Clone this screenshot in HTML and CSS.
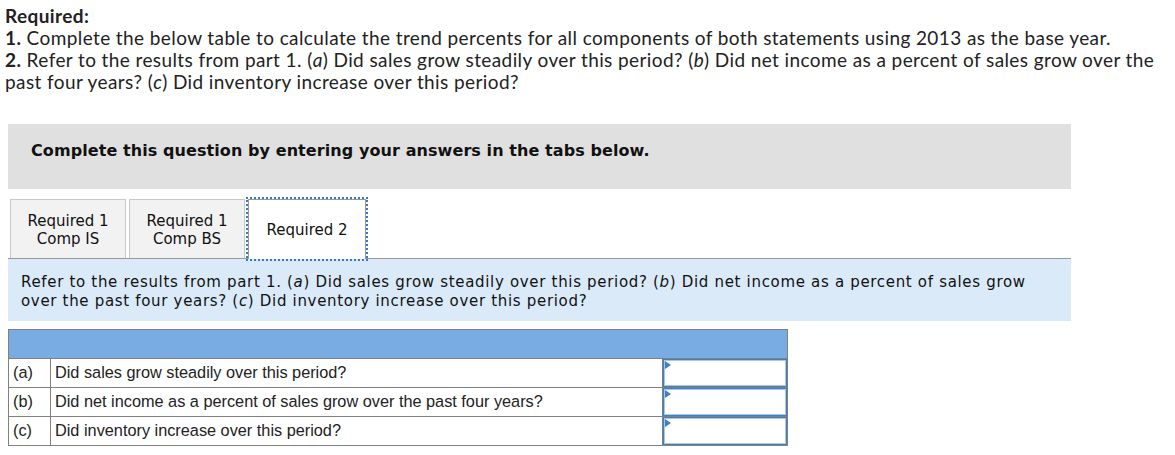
FILE: index.html
```html
<!DOCTYPE html>
<html>
<head>
<meta charset="utf-8">
<link rel="stylesheet" href="styles.css">
</head>
<body>
<div class="intro">
  <div class="req-title">Required:</div>
  <div><b>1.</b> Complete the below table to calculate the trend percents for all components of both statements using 2013 as the base year.</div>
  <div><b>2.</b> Refer to the results from part 1. (<i>a</i>) Did sales grow steadily over this period? (<i>b</i>) Did net income as a percent of sales grow over the past four years? (<i>c</i>) Did inventory increase over this period?</div>
</div>
<div class="wrap">
  <div class="banner">Complete this question by entering your answers in the tabs below.</div>
  <div class="tabs">
    <div class="tab">Required 1<br>Comp IS</div>
    <div class="tab">Required 1<br>Comp BS</div>
    <div class="tab active">Required 2</div>
  </div>
  <div class="prompt">Refer to the results from part 1. (<i>a</i>) Did sales grow steadily over this period? (<i>b</i>) Did net income as a percent of sales grow over the past four years? (<i>c</i>) Did inventory increase over this period?</div>
  <table class="qt">
    <tr class="head"><td colspan="3"></td></tr>
    <tr><td class="lbl">(a)</td><td class="q">Did sales grow steadily over this period?</td><td class="ans"><div class="inp"></div></td></tr>
    <tr><td class="lbl">(b)</td><td class="q">Did net income as a percent of sales grow over the past four years?</td><td class="ans"><div class="inp"></div></td></tr>
    <tr><td class="lbl">(c)</td><td class="q">Did inventory increase over this period?</td><td class="ans"><div class="inp"></div></td></tr>
  </table>
</div>
</body>
</html>
```
FILE: styles.css
```css
html, body { margin: 0; padding: 0; background: #fff; }
body { color: #1a1a1a; }
.intro {
  font-family: Lato, "Open Sans", sans-serif;
  font-size: 19px;
  letter-spacing: 0.4px;
  line-height: 22px;
  padding: 5px 0 0 5px;
  color: #222;
  width: 1160px;
}
.intro b, .req-title { font-weight: 700; }
.wrap { padding: 0 0 0 8px; margin-top: 31px; width: 1063px; }
.banner {
  background: #e0e0e0;
  height: 65px;
  box-sizing: border-box;
  padding: 17px 0 0 23px;
  font-family: "DejaVu Sans", Verdana, sans-serif;
  font-weight: bold;
  font-size: 16px;
  letter-spacing: 0.08px;
  color: #111;
}
.tabs {
  display: flex;
  gap: 3px;
  margin-top: 10px;
  padding-left: 2px;
  border-bottom: 1px solid #999;
  height: 59px;
}
.tab {
  width: 116px;
  box-sizing: border-box;
  height: 59px;
  background: #f2f2f2;
  border: 1px solid #c8c8c8;
  border-bottom: none;
  display: flex;
  align-items: center;
  justify-content: center;
  text-align: center;
  font-family: "DejaVu Sans", Verdana, sans-serif;
  font-size: 15px;
  line-height: 18px;
  padding-top: 2px;
  color: #111;
}
.tab.active {
  width: 118px;
  background: #fff;
  border: 1px solid #999;
  border-bottom: none;
  outline: 2px dotted #3a78c0;
  outline-offset: 0;
  height: 60px;
  padding-top: 0;
}
.prompt {
  background: #dbeaf8;
  height: 62px;
  box-sizing: border-box;
  padding: 14px 13px 0 13px;
  font-family: "DejaVu Sans", Verdana, sans-serif;
  font-size: 15px;
  letter-spacing: 0.68px;
  line-height: 19px;
  color: #111;
}
.qt {
  margin-top: 8px;
  border-collapse: collapse;
  width: 780px;
  font-family: "Liberation Sans", Arial, sans-serif;
  font-size: 16.3px;
  color: #222;
}
.qt td { border: 1px solid #808080; padding: 0 0 2px 0; height: 26px; }
.qt .head td { background: #78ace3; height: 28px; padding: 0; }
.qt .lbl { width: 42px; padding-left: 4px; box-sizing: border-box; }
.qt .q { padding-left: 4px; }
.qt .ans { width: 124px; padding: 0; height: 28px; }
.inp {
  position: relative;
  height: 28px;
  box-sizing: border-box;
  border: 1px solid #3f7fc4;
  box-shadow: inset 0 0 0 1px #a9c8ea;
  background: #fff;
}
.inp::before {
  content: "";
  position: absolute;
  left: 1px; top: 1px;
  border-left: 6px solid #3f7fc4;
  border-top: 4px solid transparent;
  border-bottom: 4px solid transparent;
}
```
